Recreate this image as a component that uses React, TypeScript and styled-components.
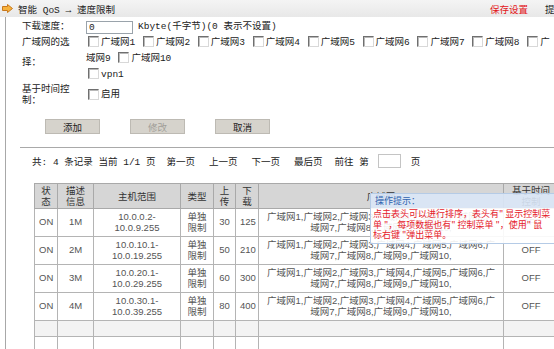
import React from "react"
import styled, { createGlobalStyle } from "styled-components"

const GlobalStyle = createGlobalStyle`
  html, body {
    margin: 0;
    padding: 0;
    overflow: hidden;
    background: #ffffff;
  }
  body {
    font-family: "Liberation Mono", "Noto Sans CJK SC", monospace;
    font-size: 9.5px;
    color: #222;
  }
`

const Page = styled.div`
  width: 574px;
`

const TopBar = styled.div`
  display: flex;
  align-items: center;
  justify-content: space-between;
  height: 17px;
  padding: 0 10px 0 2px;
  background: linear-gradient(#f4f4f4, #e8e8e8);
`

const Crumb = styled.div`
  display: flex;
  align-items: center;
  gap: 5px;
`

const TopActions = styled.div`
  display: flex;
  gap: 17px;
`

const TopLink = styled.span<{ $red?: boolean }>`
  color: ${(p) => (p.$red ? "#e3151a" : "#222")};
`

const Body = styled.div`
  margin-left: 5px;
  border-left: 1px solid #a8a8a8;
  padding: 2px 0 0 16px;
  height: 340px;
`

const Form = styled.div`
  display: grid;
  grid-template-columns: 54px 468px;
  column-gap: 10px;
`

const Label = styled.div<{ $lh?: number; $shift?: number }>`
  line-height: ${(p) => p.$lh ?? 12}px;
  align-self: ${(p) => (p.$shift !== undefined ? "start" : "center")};
  margin-top: ${(p) => p.$shift ?? 0}px;
`

const Field = styled.div<{ $h?: number }>`
  line-height: 16px;
  min-height: ${(p) => p.$h ?? 16}px;
  display: flex;
  align-items: center;
`

const Flow = styled.div`
  line-height: 16px;
`

const SpeedInput = styled.input`
  width: 47px;
  height: 13px;
  box-sizing: border-box;
  border: 1px solid #9aa3ab;
  padding: 0 2px;
  margin: 0 5px 0 0;
  font-family: "Liberation Mono", monospace;
  font-size: 9.5px;
  color: #222;
  outline: none;
`

const Box = styled.span`
  display: inline-block;
  width: 11px;
  height: 11px;
  box-sizing: border-box;
  margin: 0 2px;
  vertical-align: -2px;
  background: #fff;
  border-top: 1px solid #6f6f6f;
  border-left: 1px solid #6f6f6f;
  border-right: 1px solid #d8d8d8;
  border-bottom: 1px solid #d8d8d8;
  box-shadow: inset 1px 1px 0 #b8b8b8;
`

const Buttons = styled.div`
  display: flex;
  gap: 30px;
  margin: 13px 0 0 23px;
`

const Button = styled.div<{ $disabled?: boolean }>`
  width: 55px;
  height: 15px;
  box-sizing: border-box;
  display: flex;
  align-items: center;
  justify-content: center;
  background: #d6d3cc;
  border: 1px solid #bdbab3;
  color: ${(p) => (p.$disabled ? "#a19e98" : "#222")};
  font-family: "Noto Sans CJK SC", sans-serif;
  font-size: 9.5px;
`

const Rule = styled.div`
  margin: 13px 0 0 -2px;
  border-top: 1px solid #a9a9a9;
`

const Pager = styled.div`
  display: flex;
  align-items: center;
  height: 12px;
  margin: 7px 0 0 10px;
`

const PagerItem = styled.span<{ $gap?: number }>`
  margin-left: ${(p) => p.$gap ?? 0}px;
  white-space: pre;
`

const PageInput = styled.span`
  display: inline-block;
  width: 21px;
  height: 12px;
  margin: 0 10px 0 9px;
  border: 1px solid #c4c4c4;
  background: #fff;
`

const TableWrap = styled.div`
  position: relative;
  margin: 16px 0 0 12px;
  width: 524px;
`

const Table = styled.table`
  table-layout: fixed;
  border-collapse: collapse;
  width: 524px;
  font-family: "Liberation Sans", "Noto Sans CJK SC", sans-serif;
  font-size: 9.5px;
`

const HeadRow = styled.tr`
  height: 25px;
  background: #d6d6d6;
`

const Th = styled.th`
  border: 1px solid #a9a9a9;
  padding: 0 4px;
  font-weight: normal;
  color: #333;
  line-height: 11px;
  text-align: center;
  vertical-align: middle;
  overflow: hidden;
`

const Row = styled.tr<{ $h?: number; $shade?: boolean }>`
  height: ${(p) => p.$h ?? 28}px;
  background: ${(p) => (p.$shade ? "#f3f3f3" : "#ffffff")};
`

const Td = styled.td`
  border: 1px solid #b4b4b4;
  padding: 0 4px;
  color: #555;
  line-height: 10.5px;
  text-align: center;
  vertical-align: middle;
  overflow: hidden;
`

const Tip = styled.div`
  position: absolute;
  left: 336px;
  top: 10px;
  width: 183px;
  overflow: hidden;
  border: 1px solid #b5cbe6;
  font-family: "Noto Sans CJK SC", sans-serif;
  font-size: 9px;
`

const TipTitle = styled.div`
  height: 14px;
  line-height: 14px;
  padding-left: 4px;
  background: rgba(218, 231, 247, 0.9);
  color: #2f63b0;
`

const TipBody = styled.div`
  padding: 1px 2px 2px 2px;
  line-height: 10.5px;
  white-space: nowrap;
  background: rgba(255, 255, 255, 0.9);
  color: #e5202a;
`

const Logo = () => (
  <svg width="11" height="9" viewBox="0 0 11 9">
    <path
      d="M0.5 2.5 H5.5 V0.5 L10.5 4.5 L5.5 8.5 V6.5 H0.5 Z"
      fill="#f6b23c"
      stroke="#c9781c"
      strokeWidth="1"
    />
  </svg>
)

const wans = Array.from({ length: 10 }, (_, i) => `广域网${i + 1}`)

const rules = [
  { desc: "1M", from: "10.0.0.2", to: "10.0.9.255", up: 30, down: 125 },
  { desc: "2M", from: "10.0.10.1", to: "10.0.19.255", up: 50, down: 210 },
  { desc: "3M", from: "10.0.20.1", to: "10.0.29.255", up: 60, down: 300 },
  { desc: "4M", from: "10.0.30.1", to: "10.0.39.255", up: 80, down: 400 },
]

const widths = [23, 36, 87, 33, 22, 23, 245, 55]

const tipLines = [
  `点击表头可以进行排序，表头有" 显示控制菜`,
  `单 "，每项数据也有" 控制菜单 "，使用" 鼠`,
  `标右键 "弹出菜单。`,
]

export default function App() {
  return (
    <Page>
      <GlobalStyle />
      <TopBar>
        <Crumb>
          <Logo />
          <span>智能 QoS → 速度限制</span>
        </Crumb>
        <TopActions>
          <TopLink $red>保存设置</TopLink>
          <TopLink>提交</TopLink>
        </TopActions>
      </TopBar>

      <Body>
        <Form>
          <Label>下载速度：</Label>
          <Field>
            <SpeedInput value="0" readOnly />
            <span>Kbyte(千字节)(0 表示不设置)</span>
          </Field>

          <Label $lh={20} $shift={-2}>广域网的选择：</Label>
          <Flow>
            {wans.map((w) => (
              <React.Fragment key={w}>
                <Box />
                {w}{" "}
              </React.Fragment>
            ))}
            <br />
            <Box />
            vpn1
          </Flow>

          <Label $lh={11}>基于时间控制：</Label>
          <Field $h={23}>
            <Box />
            启用
          </Field>
        </Form>

        <Buttons>
          <Button>添加</Button>
          <Button $disabled>修改</Button>
          <Button>取消</Button>
        </Buttons>

        <Rule />

        <Pager>
          <PagerItem>共: 4 条记录 当前 1/1 页</PagerItem>
          <PagerItem $gap={11}>第一页</PagerItem>
          <PagerItem $gap={14}>上一页</PagerItem>
          <PagerItem $gap={14}>下一页</PagerItem>
          <PagerItem $gap={14}>最后页</PagerItem>
          <PagerItem $gap={12}>前往 第</PagerItem>
          <PageInput />
          <PagerItem>页</PagerItem>
        </Pager>

        <TableWrap>
          <Table>
            <colgroup>
              {widths.map((w, i) => (
                <col key={i} style={{ width: w }} />
              ))}
            </colgroup>
            <thead>
              <HeadRow>
                <Th>状态</Th>
                <Th>描述信息</Th>
                <Th>主机范围</Th>
                <Th>类型</Th>
                <Th>上传</Th>
                <Th>下载</Th>
                <Th>广域网</Th>
                <Th>基于时间控制</Th>
              </HeadRow>
            </thead>
            <tbody>
              {rules.map((r) => (
                <Row key={r.desc}>
                  <Td>ON</Td>
                  <Td>{r.desc}</Td>
                  <Td>
                    {r.from}-
                    <br />
                    {r.to}
                  </Td>
                  <Td>单独限制</Td>
                  <Td>{r.up}</Td>
                  <Td>{r.down}</Td>
                  <Td>{wans.map((w) => w + ",").join("")}</Td>
                  <Td>OFF</Td>
                </Row>
              ))}
              <Row $h={16} $shade>
                {widths.map((_, i) => (
                  <Td key={i} />
                ))}
              </Row>
              <Row $h={16}>
                {widths.map((_, i) => (
                  <Td key={i} />
                ))}
              </Row>
            </tbody>
          </Table>
          <Tip>
            <TipTitle>操作提示：</TipTitle>
            <TipBody>
              {tipLines.map((l, i) => (
                <div key={i}>{l}</div>
              ))}
            </TipBody>
          </Tip>
        </TableWrap>
      </Body>
    </Page>
  )
}
